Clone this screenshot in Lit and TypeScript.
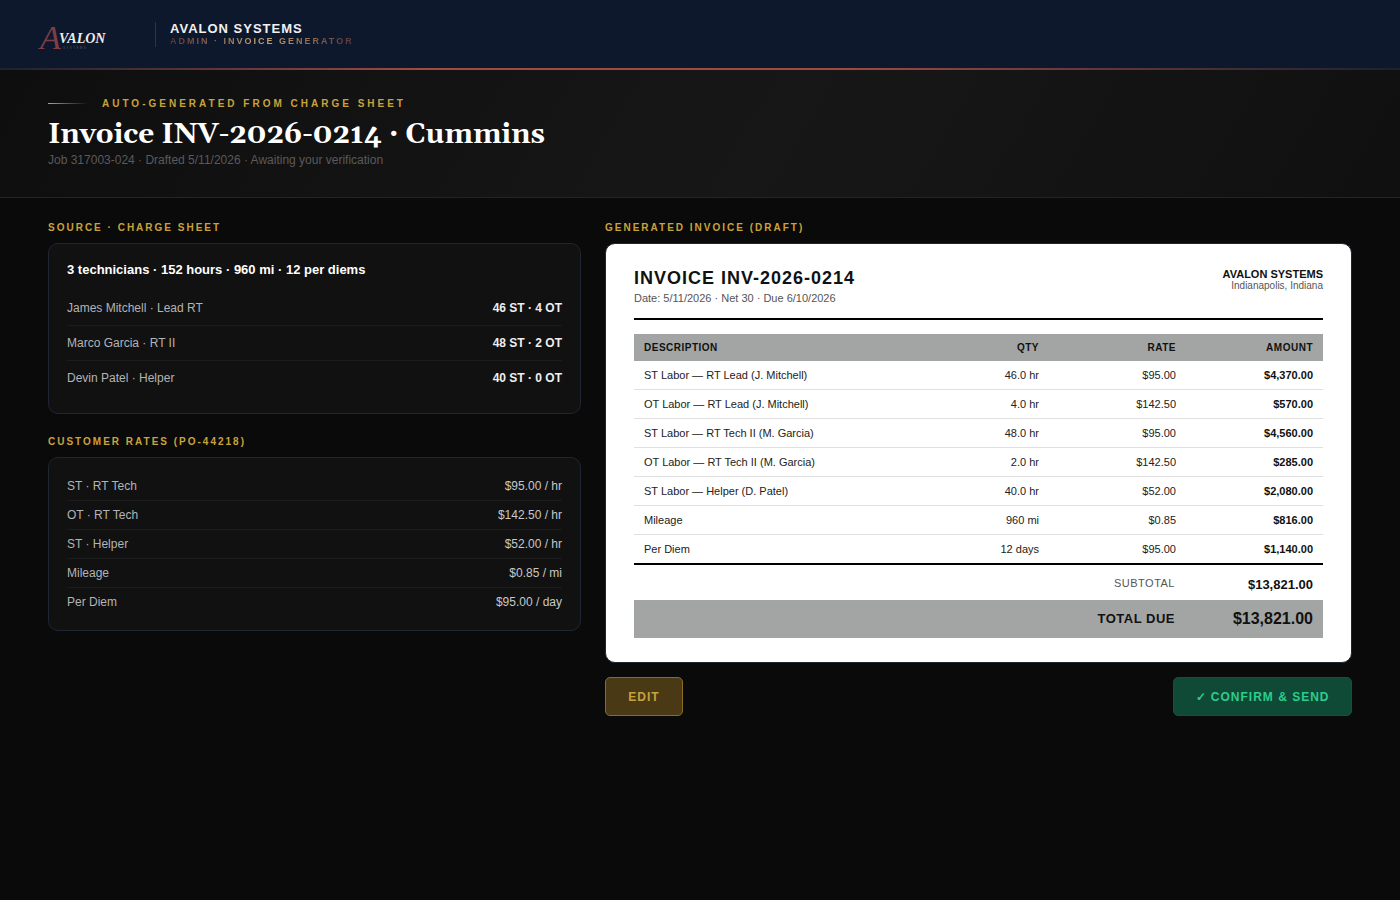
import { LitElement, html, css } from "lit";
import { customElement } from "lit/decorators.js";

const crew = [
  ["James Mitchell · Lead RT", "46 ST · 4 OT"],
  ["Marco Garcia · RT II", "48 ST · 2 OT"],
  ["Devin Patel · Helper", "40 ST · 0 OT"],
];

const rates = [
  ["ST · RT Tech", "$95.00 / hr"],
  ["OT · RT Tech", "$142.50 / hr"],
  ["ST · Helper", "$52.00 / hr"],
  ["Mileage", "$0.85 / mi"],
  ["Per Diem", "$95.00 / day"],
];

const lines = [
  ["ST Labor — RT Lead (J. Mitchell)", "46.0 hr", "$95.00", "$4,370.00"],
  ["OT Labor — RT Lead (J. Mitchell)", "4.0 hr", "$142.50", "$570.00"],
  ["ST Labor — RT Tech II (M. Garcia)", "48.0 hr", "$95.00", "$4,560.00"],
  ["OT Labor — RT Tech II (M. Garcia)", "2.0 hr", "$142.50", "$285.00"],
  ["ST Labor — Helper (D. Patel)", "40.0 hr", "$52.00", "$2,080.00"],
  ["Mileage", "960 mi", "$0.85", "$816.00"],
  ["Per Diem", "12 days", "$95.00", "$1,140.00"],
];

@customElement("app-root")
export class AppRoot extends LitElement {
  static styles = css`
    :host {
      display: block;
      min-height: 900px;
      background: #0a0a0a;
      color: #fff;
      font-family: "Liberation Sans", Arial, sans-serif;
    }
    * {
      box-sizing: border-box;
    }

    /* header */
    .topbar {
      height: 68px;
      background: #0e182d;
      padding: 0 39px;
      display: flex;
      align-items: center;
    }
    .logo {
      width: 67px;
      height: 30px;
      margin-top: 7px;
      display: block;
      overflow: visible;
    }
    .brand {
      margin-left: 49px;
      border-left: 1px solid #2a3548;
      padding-left: 14px;
      height: 25px;
      display: flex;
      flex-direction: column;
      justify-content: center;
    }
    .brand-name {
      font-size: 13px;
      line-height: 14px;
      font-weight: 700;
      letter-spacing: 1px;
      color: #f1f1f1;
    }
    .brand-sub {
      font-size: 9px;
      line-height: 10px;
      font-weight: 700;
      letter-spacing: 2px;
      background: linear-gradient(90deg, #5a3434 0%, #c9a877 50%, #5a3434 100%);
      -webkit-background-clip: text;
      background-clip: text;
      color: transparent;
      width: fit-content;
    }
    .rule {
      height: 2px;
      background: linear-gradient(90deg, #1c2230 0%, #a04a42 30%, #a04a42 60%, #1c2230 100%);
    }

    /* hero */
    .hero {
      height: 128px;
      padding: 28px 48px 0;
      background: linear-gradient(120deg, #0e0e0e 0%, #171717 55%, #101010 100%);
      border-bottom: 1px solid #20242c;
    }
    .eyebrow {
      display: flex;
      align-items: center;
      gap: 14px;
      font-size: 10px;
      line-height: 12px;
      font-weight: 700;
      letter-spacing: 3px;
      color: #c9a23c;
    }
    .eyebrow i {
      width: 40px;
      height: 1px;
      margin-bottom: 2px;
      background: linear-gradient(90deg, #c9a23c, transparent);
    }
    h1 {
      margin: 8px 0 0;
      font-family: Gelasio, Georgia, "Liberation Serif", serif;
      font-size: 28px;
      line-height: 34px;
      font-weight: 700;
      color: #fff;
    }
    .hero p {
      margin: 1px 0 0;
      font-size: 12px;
      line-height: 14px;
      color: #5a5a5a;
    }

    /* layout */
    .main {
      display: grid;
      grid-template-columns: 533px 747px;
      gap: 24px;
      padding: 24px 48px 0;
    }
    .label {
      font-size: 10px;
      line-height: 12px;
      font-weight: 700;
      letter-spacing: 2px;
      color: #c9a23c;
      margin-bottom: 9px;
    }
    .card {
      background: #111;
      border: 1px solid #1e2633;
      border-radius: 10px;
      padding: 18px;
      margin-bottom: 22px;
    }
    .summary {
      font-size: 13px;
      line-height: 15px;
      font-weight: 700;
      color: #fff;
      margin-bottom: 14px;
    }
    .row {
      display: flex;
      justify-content: space-between;
      align-items: center;
      font-size: 12px;
      color: #b4b4b4;
      border-bottom: 1px solid #1c1c1c;
    }
    .row:last-child {
      border-bottom-color: transparent;
    }
    .crew {
      padding-bottom: 17px;
    }
    .crew .row {
      height: 35px;
    }
    .crew .row b {
      color: #eee;
      font-weight: 700;
    }
    .rates {
      padding-top: 14px;
      padding-bottom: 13px;
    }
    .rates .row {
      height: 29px;
    }
    .rates .row span:last-child {
      color: #c8c8c8;
    }

    /* invoice */
    .sheet {
      background: #fff;
      border: 1px solid #1e2633;
      border-radius: 10px;
      padding: 24px 28px;
      color: #111;
    }
    .sheet-head {
      display: flex;
      justify-content: space-between;
      border-bottom: 2px solid #000;
      height: 52px;
      margin-bottom: 14px;
    }
    .sheet-head h2 {
      margin: 0;
      font-size: 18px;
      line-height: 21px;
      font-weight: 700;
      letter-spacing: 1px;
      color: #111;
    }
    .sheet-head .meta {
      font-size: 11px;
      line-height: 12px;
      margin-top: 3px;
      color: #555;
    }
    .from {
      text-align: right;
      font-size: 11px;
      line-height: 11px;
      font-weight: 700;
      color: #111;
      margin-top: 1px;
    }
    .from div {
      font-size: 10px;
      line-height: 11px;
      font-weight: 400;
      color: #555;
    }
    table {
      width: 100%;
      border-collapse: separate;
      border-spacing: 0;
      table-layout: fixed;
      font-size: 11px;
      color: #222;
    }
    th {
      background: #a3a5a4;
      height: 27px;
      padding: 0 10px;
      font-size: 10px;
      font-weight: 700;
      letter-spacing: 0.5px;
      text-align: right;
      color: #111;
    }
    td {
      height: 29px;
      padding: 0 10px;
      text-align: right;
      border-bottom: 1px solid #e0e0e0;
    }
    th:first-child,
    td:first-child {
      text-align: left;
    }
    td:last-child {
      font-weight: 700;
      color: #111;
    }
    tr:last-child td {
      height: 30px;
      border-bottom: 2px solid #000;
    }
    .subtotal,
    .total {
      display: flex;
      justify-content: flex-end;
      align-items: center;
      padding-right: 10px;
    }
    .subtotal {
      height: 35px;
      padding-top: 3px;
      font-size: 11px;
      letter-spacing: 0.5px;
      color: #555;
    }
    .subtotal span {
      padding-bottom: 2px;
    }
    .subtotal b {
      width: 138px;
      text-align: right;
      font-size: 13px;
      letter-spacing: 0;
      color: #111;
    }
    .total {
      height: 38px;
      background: #a3a5a4;
      font-size: 13px;
      font-weight: 700;
      letter-spacing: 0.5px;
      color: #111;
    }
    .total span {
      padding-bottom: 2px;
    }
    .total b {
      width: 138px;
      text-align: right;
      font-size: 16px;
      letter-spacing: 0;
    }

    /* actions */
    .actions {
      display: flex;
      justify-content: space-between;
      margin-top: 14px;
    }
    button {
      font-family: inherit;
      font-size: 12px;
      font-weight: 700;
      letter-spacing: 1px;
      height: 39px;
      border-radius: 5px;
      padding: 0;
    }
    .edit {
      width: 78px;
      background: #4a3915;
      border: 1px solid #8a6d25;
      color: #c9a23c;
    }
    .confirm {
      width: 179px;
      background: #0f4a36;
      border: 1px solid #12513c;
      color: #2ecc8f;
    }
  `;

  render() {
    return html`
      <div class="topbar">
        <svg class="logo" viewBox="0 0 67 30" aria-label="Avalon Systems">
          <text x="1" y="26" font-family="Liberation Serif" font-style="italic" font-size="34" fill="#7d3f44">A</text>
          <text x="20" y="20" font-family="Liberation Serif" font-style="italic" font-weight="700" font-size="14" fill="#eee">VALON</text>
          <text x="24" y="26" font-family="Liberation Sans" font-size="3" letter-spacing="1.4" fill="#555">SYSTEMS</text>
        </svg>
        <div class="brand">
          <div class="brand-name">AVALON SYSTEMS</div>
          <div class="brand-sub">ADMIN · INVOICE GENERATOR</div>
        </div>
      </div>
      <div class="rule"></div>
      <section class="hero">
        <div class="eyebrow"><i></i>AUTO-GENERATED FROM CHARGE SHEET</div>
        <h1>Invoice INV-2026-0214 · Cummins</h1>
        <p>Job 317003-024 · Drafted 5/11/2026 · Awaiting your verification</p>
      </section>
      <div class="main">
        <div>
          <div class="label">SOURCE · CHARGE SHEET</div>
          <div class="card crew">
            <div class="summary">3 technicians · 152 hours · 960 mi · 12 per diems</div>
            ${crew.map(([n, h]) => html`<div class="row"><span>${n}</span><b>${h}</b></div>`)}
          </div>
          <div class="label">CUSTOMER RATES (PO-44218)</div>
          <div class="card rates">
            ${rates.map(([n, r]) => html`<div class="row"><span>${n}</span><span>${r}</span></div>`)}
          </div>
        </div>
        <div>
          <div class="label">GENERATED INVOICE (DRAFT)</div>
          <div class="sheet">
            <div class="sheet-head">
              <div>
                <h2>INVOICE INV-2026-0214</h2>
                <div class="meta">Date: 5/11/2026 · Net 30 · Due 6/10/2026</div>
              </div>
              <div class="from">AVALON SYSTEMS<div>Indianapolis, Indiana</div></div>
            </div>
            <table>
              <colgroup><col style="width:295px" /><col style="width:120px" /><col style="width:137px" /><col /></colgroup>
              <thead><tr><th>DESCRIPTION</th><th>QTY</th><th>RATE</th><th>AMOUNT</th></tr></thead>
              <tbody>
                ${lines.map(
                  ([d, q, r, a]) => html`<tr><td>${d}</td><td>${q}</td><td>${r}</td><td>${a}</td></tr>`
                )}
              </tbody>
            </table>
            <div class="subtotal"><span>SUBTOTAL</span><b>$13,821.00</b></div>
            <div class="total"><span>TOTAL DUE</span><b>$13,821.00</b></div>
          </div>
          <div class="actions">
            <button class="edit">EDIT</button>
            <button class="confirm">✓ CONFIRM &amp; SEND</button>
          </div>
        </div>
      </div>
    `;
  }
}
